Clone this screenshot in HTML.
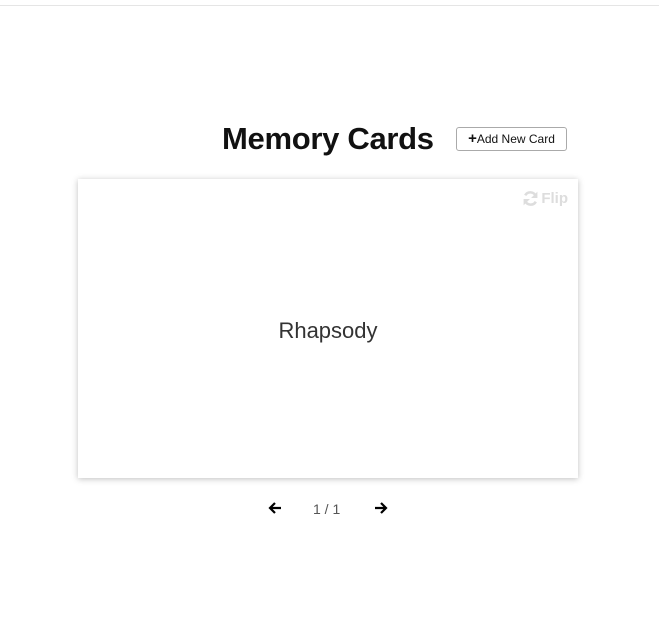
<!DOCTYPE html>
<html><head><style>
body{margin:0;width:659px;height:631px;background:#fff;font-family:"Liberation Sans",sans-serif;position:relative;overflow:hidden}
.top{position:absolute;top:5px;left:0;right:0;height:1px;background:#e5e5e5}
h1{position:absolute;left:222px;top:121px;margin:0;font-size:31px;font-weight:bold;color:#111;letter-spacing:-0.3px}
.btn{position:absolute;left:456px;top:127px;width:111px;height:24px;border:1px solid #aaa;border-radius:3px;font-size:12px;line-height:22px;text-align:center;color:#111;box-sizing:border-box}
.card{position:absolute;left:78px;top:179px;width:500px;height:299px;background:#fff;box-shadow:0 1px 6px rgba(0,0,0,.25)}
.flip{position:absolute;right:10px;top:11px;color:#ddd;font-weight:bold;font-size:15px;display:flex;align-items:center;gap:2px}
.word{position:absolute;left:0;right:0;top:139px;text-align:center;font-size:22px;color:#333}
.nav{position:absolute;top:501px;font-size:14px;color:#555}
</style></head><body>
<div class="top"></div>
<h1>Memory Cards</h1>
<div class="btn"><b style="font-size:15px">+</b>Add New Card</div>
<div class="card">
<div class="flip"><svg width="17" height="17" viewBox="0 0 16 16"><path d="M13 6A5.5 5.5 0 0 0 3 5M3 10a5.5 5.5 0 0 0 10 1" fill="none" stroke="#ddd" stroke-width="2.4"/><path d="M14.5 1.5v6h-6zM1.5 14.5v-6h6z" fill="#ddd"/></svg>Flip</div>
<div class="word">Rhapsody</div>
</div>
<svg style="position:absolute;left:267px;top:500px" width="16" height="16" viewBox="0 0 16 16"><path d="M14 8H3M8 3L3 8l5 5" fill="none" stroke="#000" stroke-width="2.2"/></svg>
<div class="nav" style="left:313px">1 / 1</div>
<svg style="position:absolute;left:373px;top:500px" width="16" height="16" viewBox="0 0 16 16"><path d="M2 8h11M8 3l5 5-5 5" fill="none" stroke="#000" stroke-width="2.2"/></svg>
</body></html>
